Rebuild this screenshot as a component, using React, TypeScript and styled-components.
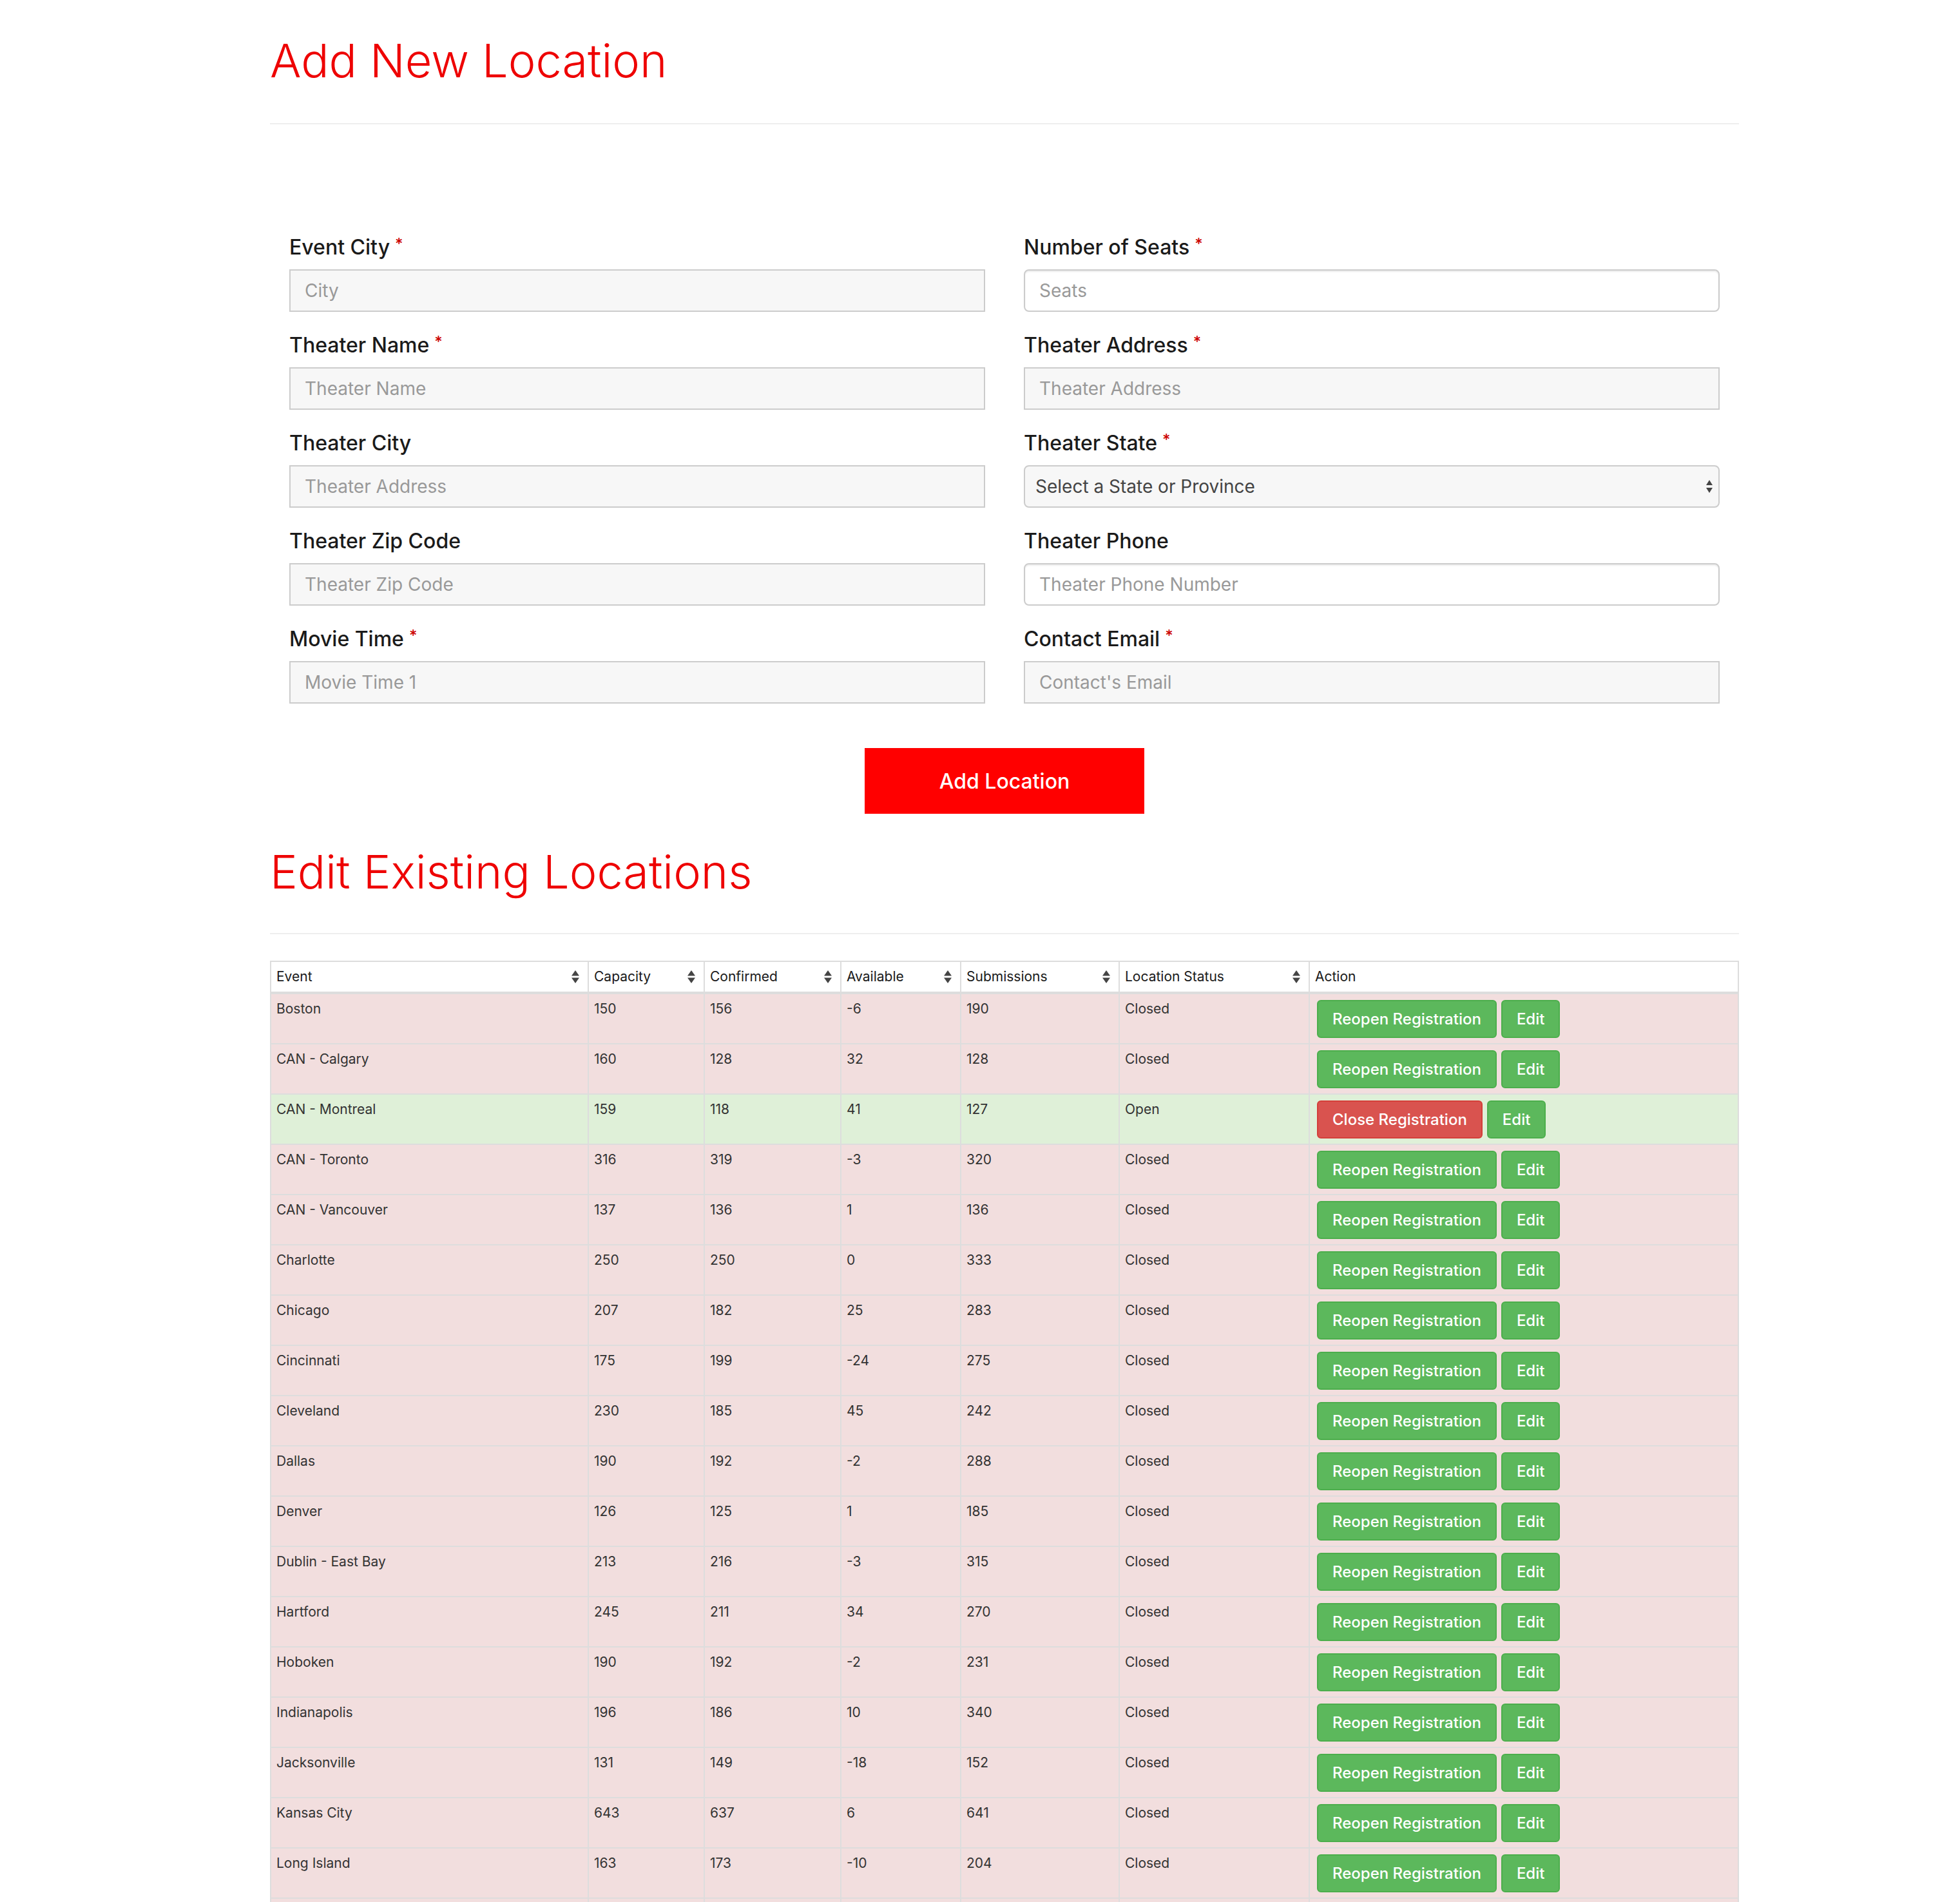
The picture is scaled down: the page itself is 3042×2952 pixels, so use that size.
import React from 'react';
import styled, { createGlobalStyle } from 'styled-components';

const GlobalStyle = createGlobalStyle`
  * { box-sizing: border-box; }
  html, body { margin: 0; padding: 0; background: #fff; }
  body {
    font-family: Inter, "Noto Sans", "Liberation Sans", sans-serif;
    color: #333;
  }
`;

const Page = styled.div`
  width: 2280px;
  margin-left: 419px;
  padding-bottom: 60px;
`;

const PageTitle = styled.h1<{ $top: number }>`
  margin: 0;
  padding-top: ${({ $top }) => $top}px;
  font-size: 72px;
  font-weight: 300;
  line-height: 79px;
  color: #ee0000;
`;

const Rule = styled.hr<{ $top: number }>`
  margin: ${({ $top }) => $top}px 0 0;
  height: 0;
  border: 0;
  border-top: 2px solid #eee;
`;

const Form = styled.form`
  margin-top: 169px;
  padding: 0 30px;
`;

const FieldGrid = styled.div`
  display: grid;
  grid-template-columns: 1fr 1fr;
  column-gap: 60px;
  row-gap: 30px;
`;

const Field = styled.div`
  display: flex;
  flex-direction: column;
`;

const Label = styled.label`
  display: block;
  height: 44px;
  font-size: 32px;
  font-weight: 500;
  line-height: 44px;
  color: #1a1a1a;
  margin-bottom: 12px;
`;

const Required = styled.span`
  position: relative;
  top: -8px;
  margin-left: 8px;
  color: #cc0000;
  font-size: 24px;
  line-height: 0;
`;

const TextInput = styled.input<{ $rounded?: boolean }>`
  width: 100%;
  height: 66px;
  padding: 0 22px;
  font-family: inherit;
  font-size: 28px;
  color: #555;
  background: ${({ $rounded }) => ($rounded ? '#fff' : '#f7f7f7')};
  border: 2px solid #ccc;
  border-radius: ${({ $rounded }) => ($rounded ? '8px' : '0')};
  box-shadow: ${({ $rounded }) => ($rounded ? 'inset 0 2px 2px rgba(0,0,0,0.075)' : 'none')};
  outline: none;

  &::placeholder {
    color: #999;
  }
`;

const SelectWrap = styled.div`
  position: relative;
`;

const Select = styled.select`
  width: 100%;
  height: 66px;
  padding: 0 40px 0 16px;
  appearance: none;
  font-family: inherit;
  font-size: 28px;
  color: #444;
  background: #f7f7f7;
  border: 2px solid #ccc;
  border-radius: 8px;
  outline: none;
`;

const SelectArrows = styled.svg`
  position: absolute;
  right: 10px;
  top: 22px;
  pointer-events: none;
`;

const SubmitButton = styled.button`
  display: block;
  margin: 69px auto 0;
  width: 434px;
  height: 102px;
  border: 0;
  background: #ff0000;
  color: #fff;
  font-family: inherit;
  font-size: 32px;
  font-weight: 500;
`;

const Table = styled.table`
  margin-top: 41px;
  width: 100%;
  table-layout: fixed;
  border-collapse: separate;
  border-spacing: 0;
  border-top: 2px solid #ddd;
  border-left: 2px solid #ddd;
  font-size: 21px;
  line-height: 30px;
`;

const HeadCell = styled.th`
  padding: 8px 8px;
  text-align: left;
  font-weight: 400;
  color: #1a1a1a;
  background: #fff;
  border-right: 2px solid #ddd;
  border-bottom: 4px solid #ddd;
`;

const HeadInner = styled.div`
  display: flex;
  align-items: center;
  justify-content: space-between;
`;

const Row = styled.tr<{ $open: boolean }>`
  background: ${({ $open }) => ($open ? '#dff0d8' : '#f2dede')};
`;

const Cell = styled.td`
  padding: 8px 8px;
  vertical-align: top;
  color: #333;
  border-right: 2px solid #ddd;
  border-bottom: 2px solid #ddd;
`;

const Actions = styled.div`
  display: flex;
  gap: 7px;
  margin-top: 1px;
  padding-left: 3px;
`;

const ActionButton = styled.button<{ $tone: 'success' | 'danger' }>`
  height: 59px;
  padding: 0 22px;
  border-radius: 6px;
  border: 2px solid ${({ $tone }) => ($tone === 'success' ? '#4cae4c' : '#d43f3a')};
  background: ${({ $tone }) => ($tone === 'success' ? '#5cb85c' : '#d9534f')};
  color: #fff;
  font-family: inherit;
  font-size: 24px;
  font-weight: 500;
  white-space: nowrap;
`;

const SortIcon = () => (
  <svg width="12" height="20" viewBox="0 0 12 20" style={{ marginRight: 5, flexShrink: 0 }}>
    <path d="M0 8.5 L6 0 L12 8.5 Z" fill="#444" />
    <path d="M0 11.5 L12 11.5 L6 20 Z" fill="#444" />
  </svg>
);

type FieldDef = {
  label: string;
  placeholder: string;
  required?: boolean;
  rounded?: boolean;
  select?: boolean;
};

const fields: FieldDef[] = [
  { label: 'Event City', placeholder: 'City', required: true },
  { label: 'Number of Seats', placeholder: 'Seats', required: true, rounded: true },
  { label: 'Theater Name', placeholder: 'Theater Name', required: true },
  { label: 'Theater Address', placeholder: 'Theater Address', required: true },
  { label: 'Theater City', placeholder: 'Theater Address' },
  { label: 'Theater State', placeholder: 'Select a State or Province', required: true, select: true },
  { label: 'Theater Zip Code', placeholder: 'Theater Zip Code' },
  { label: 'Theater Phone', placeholder: 'Theater Phone Number', rounded: true },
  { label: 'Movie Time', placeholder: 'Movie Time 1', required: true },
  { label: 'Contact Email', placeholder: "Contact's Email", required: true },
];

const columns = [
  { title: 'Event', width: 493, sort: true },
  { title: 'Capacity', width: 180, sort: true },
  { title: 'Confirmed', width: 212, sort: true },
  { title: 'Available', width: 186, sort: true },
  { title: 'Submissions', width: 246, sort: true },
  { title: 'Location Status', width: 295, sort: true },
  { title: 'Action', width: undefined, sort: false },
];

type Location = [string, number, number, number, number, boolean];

const locations: Location[] = [
  ['Boston', 150, 156, -6, 190, false],
  ['CAN - Calgary', 160, 128, 32, 128, false],
  ['CAN - Montreal', 159, 118, 41, 127, true],
  ['CAN - Toronto', 316, 319, -3, 320, false],
  ['CAN - Vancouver', 137, 136, 1, 136, false],
  ['Charlotte', 250, 250, 0, 333, false],
  ['Chicago', 207, 182, 25, 283, false],
  ['Cincinnati', 175, 199, -24, 275, false],
  ['Cleveland', 230, 185, 45, 242, false],
  ['Dallas', 190, 192, -2, 288, false],
  ['Denver', 126, 125, 1, 185, false],
  ['Dublin - East Bay', 213, 216, -3, 315, false],
  ['Hartford', 245, 211, 34, 270, false],
  ['Hoboken', 190, 192, -2, 231, false],
  ['Indianapolis', 196, 186, 10, 340, false],
  ['Jacksonville', 131, 149, -18, 152, false],
  ['Kansas City', 643, 637, 6, 641, false],
  ['Long Island', 163, 173, -10, 204, false],
  ['Los Angeles', 410, 402, 8, 455, false],
];

export default function App() {
  return (
    <>
      <GlobalStyle />
      <Page>
        <PageTitle $top={54}>Add New Location</PageTitle>
        <Rule $top={58} />

        <Form onSubmit={(e) => e.preventDefault()}>
          <FieldGrid>
            {fields.map((f) => (
              <Field key={f.label}>
                <Label>
                  {f.label}
                  {f.required && <Required>*</Required>}
                </Label>
                {f.select ? (
                  <SelectWrap>
                    <Select defaultValue="">
                      <option value="">{f.placeholder}</option>
                    </Select>
                    <SelectArrows width="12" height="22" viewBox="0 0 12 22">
                      <path d="M1 9 L6 1 L11 9 Z" fill="#444" />
                      <path d="M1 13 L11 13 L6 21 Z" fill="#444" />
                    </SelectArrows>
                  </SelectWrap>
                ) : (
                  <TextInput placeholder={f.placeholder} $rounded={f.rounded} />
                )}
              </Field>
            ))}
          </FieldGrid>
          <SubmitButton type="submit">Add Location</SubmitButton>
        </Form>

        <PageTitle $top={50}>Edit Existing Locations</PageTitle>
        <Rule $top={56} />

        <Table>
          <colgroup>
            {columns.map((c) => (
              <col key={c.title} style={c.width ? { width: c.width } : undefined} />
            ))}
          </colgroup>
          <thead>
            <tr>
              {columns.map((c) => (
                <HeadCell key={c.title}>
                  <HeadInner>
                    <span>{c.title}</span>
                    {c.sort && <SortIcon />}
                  </HeadInner>
                </HeadCell>
              ))}
            </tr>
          </thead>
          <tbody>
            {locations.map(([name, cap, conf, avail, subs, open]) => (
              <Row key={name} $open={open}>
                <Cell>{name}</Cell>
                <Cell>{cap}</Cell>
                <Cell>{conf}</Cell>
                <Cell>{avail}</Cell>
                <Cell>{subs}</Cell>
                <Cell>{open ? 'Open' : 'Closed'}</Cell>
                <Cell>
                  <Actions>
                    {open ? (
                      <ActionButton $tone="danger">Close Registration</ActionButton>
                    ) : (
                      <ActionButton $tone="success">Reopen Registration</ActionButton>
                    )}
                    <ActionButton $tone="success">Edit</ActionButton>
                  </Actions>
                </Cell>
              </Row>
            ))}
          </tbody>
        </Table>
      </Page>
    </>
  );
}
